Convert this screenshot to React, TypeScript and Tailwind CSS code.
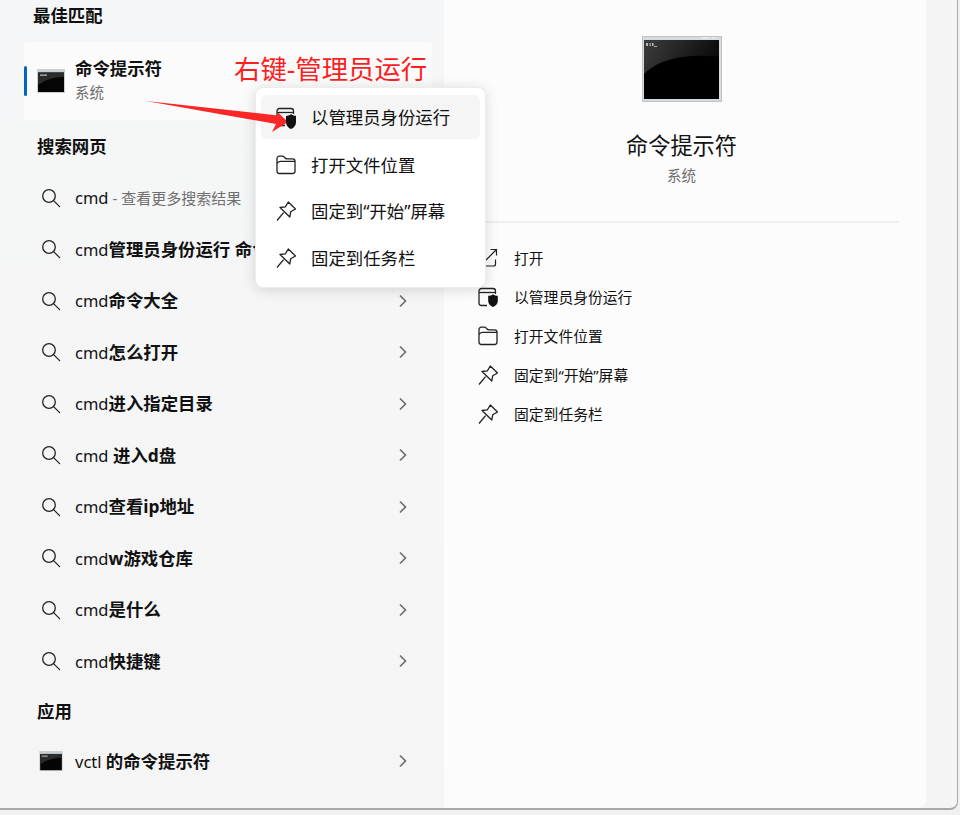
import React from "react";

const FONT = '"Noto Sans", "Noto Sans CJK SC", sans-serif';

function SearchIcon() {
  return (
    <svg width="20" height="20" viewBox="0 0 20 20" fill="none" stroke="#222" strokeWidth="1.3" className="shrink-0">
      <circle cx="8" cy="8" r="6.3" />
      <path d="M12.6 12.6 L18.6 18.6" strokeLinecap="round" />
    </svg>
  );
}

function Chevron() {
  return (
    <svg width="10" height="14" viewBox="0 0 10 14" fill="none" stroke="#6b6b6b" strokeWidth="1.6" className="shrink-0">
      <path d="M2 1.5 L7.5 7 L2 12.5" />
    </svg>
  );
}

function SmallConsole({ w, h }: { w: number; h: number }) {
  return (
    <svg width={w} height={h} viewBox="0 0 28 24" className="shrink-0">
      <rect x="0" y="0" width="28" height="24" fill="#c9ced3" />
      <rect x="1" y="3.5" width="26" height="19.5" fill="#050505" />
      <path d="M1 3.5 H27 V8 C16 8 8 11 1 16 Z" fill="#2b2b2b" />
      <rect x="3" y="5.5" width="7" height="1.3" fill="#b5b5b5" />
    </svg>
  );
}

function BigConsole() {
  return (
    <svg width="80" height="66" viewBox="0 0 80 66" className="shrink-0">
      <defs>
        <linearGradient id="gl" x1="0" y1="0" x2="1" y2="0.25">
          <stop offset="0" stopColor="#3d3d3d" />
          <stop offset="1" stopColor="#0c0c0c" />
        </linearGradient>
      </defs>
      <rect x="0.5" y="0.5" width="79" height="65" fill="#d6dbe0" stroke="#bfc4c9" />
      <rect x="2" y="4" width="75" height="59" fill="#000" />
      <path d="M2 4 H77 V20.5 C50 18 20 20 2 38 Z" fill="url(#gl)" />
      <rect x="4" y="7" width="2" height="3" fill="#bbb" />
      <rect x="7.5" y="7" width="1.2" height="3" fill="#bbb" />
      <rect x="10" y="7" width="1.5" height="3" fill="#bbb" />
      <rect x="12" y="10" width="3" height="1" fill="#aaa" />
      <rect x="60" y="1.2" width="7" height="1.2" fill="#eef0f2" />
      <rect x="70" y="1.2" width="3" height="1.2" fill="#eef0f2" />
    </svg>
  );
}

function RunAsIcon() {
  return (
    <svg width="20" height="20" viewBox="0 0 20 20" fill="none" className="shrink-0">
      <path d="M9 18.5 H3.5 A2.5 2.5 0 0 1 1 16 V4 A2.5 2.5 0 0 1 3.5 1.5 H15 A2.5 2.5 0 0 1 17.5 4 V7" stroke="#222" strokeWidth="1.3" />
      <path d="M1 5.5 H17.5" stroke="#222" strokeWidth="1.3" />
      <path d="M15 7.2 C16.4 8.4 18 8.8 19.8 8.8 V14 C19.8 17 17.6 19 15 20 C12.4 19 10.2 17 10.2 14 V8.8 C12 8.8 13.6 8.4 15 7.2 Z" fill="#111" />
    </svg>
  );
}

function FolderIcon() {
  return (
    <svg width="20" height="20" viewBox="0 0 20 20" fill="none" stroke="#222" strokeWidth="1.3" className="shrink-0">
      <path d="M1 16 V3.5 A2.3 2.3 0 0 1 3.3 1.2 H6.5 C7.6 1.2 8 1.9 8.8 2.8 C9.4 3.5 10 3.8 11 3.8 H16.7 A2.3 2.3 0 0 1 19 6.1 V16 A2.5 2.5 0 0 1 16.5 18.5 H3.5 A2.5 2.5 0 0 1 1 16 Z" />
      <path d="M1 8.5 C2 6.6 3.2 6.3 4.5 6.3 H19" />
    </svg>
  );
}

function PinIcon() {
  return (
    <svg width="20" height="20" viewBox="0 0 20 20" fill="none" stroke="#222" strokeWidth="1.3" strokeLinejoin="round" className="shrink-0">
      <path d="M12.3 1 L19.5 8 L14.7 10.8 L13.8 16 L4 6.5 L9.3 5.8 Z" />
      <path d="M1 19.5 L7.6 11.7" />
    </svg>
  );
}

function OpenIcon() {
  return (
    <svg width="20" height="20" viewBox="0 0 20 20" fill="none" stroke="#222" strokeWidth="1.2" className="shrink-0">
      <path d="M8 2 H3.5 A2 2 0 0 0 1.5 4 V16 A2 2 0 0 0 3.5 18 H15.5 A2 2 0 0 0 17.5 16 V11.5" />
      <path d="M12.5 1.5 H18.5 V7.5 M18.5 1.5 L8 12" />
    </svg>
  );
}

const SEARCH_ROWS: { a: string; b: string; chevron?: boolean; muted?: boolean }[] = [
  { a: "cmd", b: " - 查看更多搜索结果", muted: true },
  { a: "cmd", b: "管理员身份运行 命令" },
  { a: "cmd", b: "命令大全", chevron: true },
  { a: "cmd", b: "怎么打开", chevron: true },
  { a: "cmd", b: "进入指定目录", chevron: true },
  { a: "cmd", b: " 进入d盘", chevron: true },
  { a: "cmd", b: "查看ip地址", chevron: true },
  { a: "cmd", b: "w游戏仓库", chevron: true },
  { a: "cmd", b: "是什么", chevron: true },
  { a: "cmd", b: "快捷键", chevron: true },
];

const ACTIONS = [
  { icon: <OpenIcon />, label: "打开" },
  { icon: <RunAsIcon />, label: "以管理员身份运行" },
  { icon: <FolderIcon />, label: "打开文件位置" },
  { icon: <PinIcon />, label: "固定到“开始”屏幕" },
  { icon: <PinIcon />, label: "固定到任务栏" },
];

const MENU = [
  { icon: <RunAsIcon />, label: "以管理员身份运行", active: true },
  { icon: <FolderIcon />, label: "打开文件位置" },
  { icon: <PinIcon />, label: "固定到“开始”屏幕" },
  { icon: <PinIcon />, label: "固定到任务栏" },
];

export default function App() {
  return (
    <div className="relative w-[960px] h-[815px] overflow-hidden bg-[#f1f1f1] text-[#111]" style={{ fontFamily: FONT }}>
      <div className="flex w-[958px] h-[810px] bg-[#f4f4f4] rounded-br-lg border-b-2 border-r border-[#a9a9a9] overflow-hidden">
        {/* left column */}
        <div className="w-[444px] shrink-0 flex flex-col bg-gradient-to-b from-[#f5f6f7] to-[#f5f5f5]">
          <div className="h-[42px] pl-[33px] pt-[2px] text-[17.4px] leading-[26px] font-bold shrink-0">最佳匹配</div>
          <div className="relative ml-[24px] w-[408px] h-[78px] shrink-0 rounded-[4px] bg-[#fbfbfc] flex items-center pl-[13px]">
            <div className="absolute left-0 top-[24px] w-[3px] h-[30px] rounded-sm bg-[#0067c0]" />
            <SmallConsole w={28} h={24} />
            <div className="ml-[10px] mb-[4px] flex flex-col">
              <div className="text-[17.4px] leading-[26px] font-bold">命令提示符</div>
              <div className="text-[14.5px] leading-[22px] text-[#6f6f6f]">系统</div>
            </div>
          </div>
          <div className="h-[52px] pl-[37px] pt-[13px] text-[17.4px] leading-[26px] font-bold shrink-0">搜索网页</div>
          <div className="flex flex-col">
            {SEARCH_ROWS.map((r, i) => (
              <div key={i} className="h-[51.5px] flex items-center pl-[41px] pr-[36px]">
                <SearchIcon />
                <div className="ml-[14px] flex-1 text-[16.5px] leading-[24px] whitespace-pre overflow-hidden">
                  <span>{r.a}</span>
                  {r.muted ? (
                    <span className="text-[15px] text-[#6f6f6f]">{r.b}</span>
                  ) : (
                    <span className="font-bold text-[17.4px]">{r.b}</span>
                  )}
                </div>
                {r.chevron && <Chevron />}
              </div>
            ))}
          </div>
          <div className="h-[50px] pl-[37px] pt-[11px] text-[17.4px] leading-[26px] font-bold shrink-0">应用</div>
          <div className="h-[48px] flex items-center pl-[39px] pr-[36px] shrink-0">
            <SmallConsole w={24} h={20} />
            <div className="ml-[12px] flex-1 text-[16.5px] leading-[24px]">
              vctl <span className="font-bold text-[17.4px]">的命令提示符</span>
            </div>
            <Chevron />
          </div>
        </div>

        {/* right column */}
        <div className="w-[482px] shrink-0 bg-[#fcfcfc] rounded-br-lg flex flex-col">
          <div className="flex flex-col items-center pt-[36px] pr-[7px]">
            <BigConsole />
            <div className="mt-[27px] text-[22.2px] leading-[34px]">命令提示符</div>
            <div className="mt-[1px] text-[14.5px] leading-[22px] text-[#6f6f6f]">系统</div>
          </div>
          <div className="mt-[35px] ml-[15px] mr-[27px] h-[2px] bg-[#efefef] shrink-0" />
          <div className="mt-[15px] flex flex-col">
            {ACTIONS.map((a) => (
              <div key={a.label} className="h-[39px] flex items-center pl-[34px]">
                {a.icon}
                <span className="ml-[16px] text-[14.8px] leading-[22px]">{a.label}</span>
              </div>
            ))}
          </div>
        </div>
      </div>

      {/* context menu */}
      <div className="absolute left-[255px] top-[87px] w-[231px] h-[201px] rounded-lg bg-white border border-[#ececec] shadow-[0_2px_14px_rgba(0,0,0,0.14)] pt-[7px] px-[5px]">
        {MENU.map((m) => (
          <div
            key={m.label}
            className={m.active ? "h-[44px] mb-[2.5px] rounded-md bg-[#f5f5f5] flex items-center pl-[15px]" : "h-[46.5px] flex items-center pl-[15px]"}
          >
            {m.icon}
            <span className="ml-[15px] text-[17.4px] leading-[26px]">{m.label}</span>
          </div>
        ))}
      </div>

      {/* annotation */}
      <div className="absolute left-[234px] top-[51px] text-[26.4px] leading-[36px] text-[#fb1f1f] whitespace-pre">右键-管理员运行</div>
      <svg className="absolute left-0 top-0 pointer-events-none" width="300" height="140" viewBox="0 0 300 140">
        <polygon points="146,101 278,115.5 278,112.5 288,122 272,132 276,124" fill="#fb2626" />
        <path d="M291 114.5 C292.5 115.6 294 116 296 116 V122 C296 125.5 294 127.8 291 129 C288 127.8 286 125.5 286 122 V116 C288 116 289.5 115.6 291 114.5 Z" fill="#111" />
      </svg>
    </div>
  );
}
